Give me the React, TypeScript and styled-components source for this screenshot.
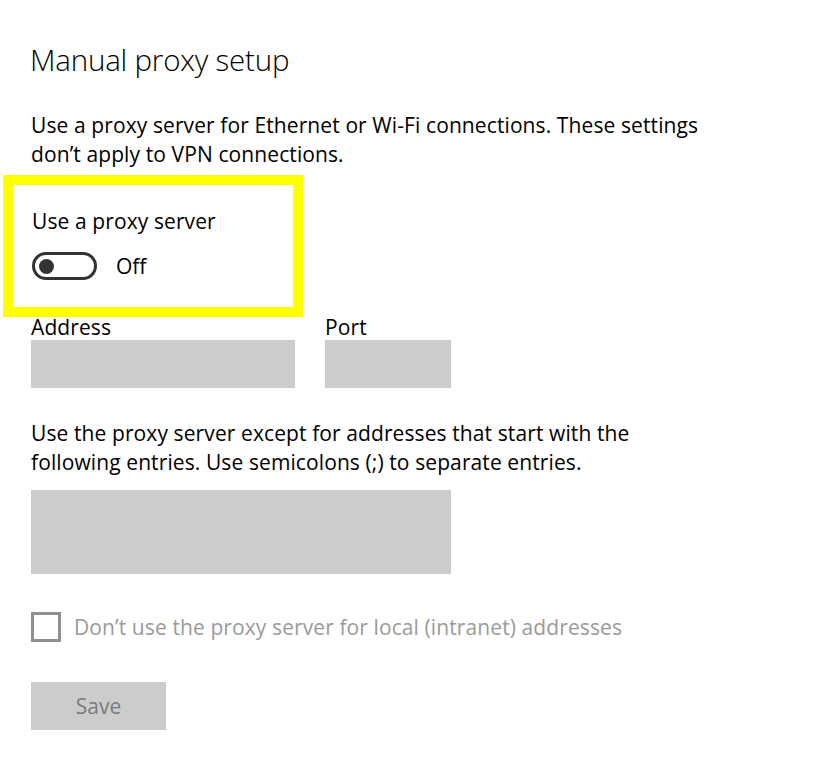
import React from 'react';
import styled, { createGlobalStyle } from 'styled-components';

const GlobalStyle = createGlobalStyle`
  html, body {
    margin: 0;
    padding: 0;
    background: #ffffff;
  }

  body {
    font-family: "Open Sans", "Noto Sans", sans-serif;
    color: #000000;
  }
`;

export default function App() {
	return (
		<>
			<GlobalStyle/>
			<Page>
				<Title>Manual proxy setup</Title>

				<Text>
					Use a proxy server for Ethernet or Wi-Fi connections. These settings<br/>
					don’t apply to VPN connections.
				</Text>

				<Highlight>
					<Text>Use a proxy server</Text>
					<ToggleRow>
						<Toggle>
							<Knob/>
						</Toggle>
						<ToggleState>Off</ToggleState>
					</ToggleRow>
				</Highlight>

				<Fields>
					<Field>
						<Label>Address</Label>
						<Input width={264}/>
					</Field>
					<Field>
						<Label>Port</Label>
						<Input width={126}/>
					</Field>
				</Fields>

				<Exceptions>
					Use the proxy server except for addresses that start with the<br/>
					following entries. Use semicolons (;) to separate entries.
				</Exceptions>
				<TextArea/>

				<CheckRow>
					<CheckBox/>
					<CheckLabel>Don’t use the proxy server for local (intranet) addresses</CheckLabel>
				</CheckRow>

				<SaveButton>Save</SaveButton>
			</Page>
		</>
	);
}


const Page = styled.div`
  display: flex;
  flex-direction: column;
  align-items: flex-start;
  padding: 40px 0 26px 31px;
`;

const Title = styled.h1`
  margin: 0 0 31px -1px;
  font-size: 29.5px;
  font-weight: 300;
  line-height: 40px;
  letter-spacing: -0.2px;
`;

const Text = styled.div`
  margin: 0;
  font-size: 21px;
  line-height: 29px;
  letter-spacing: 0.1px;
`;

const Highlight = styled.div`
  box-sizing: border-box;
  width: 300px;
  margin: 6px 0 0 -28px;
  padding: 22px 0 27px 19px;
  border: 10px solid #ffff00;
`;

const ToggleRow = styled.div`
  display: flex;
  align-items: center;
  gap: 19px;
  margin-top: 16px;
`;

const Toggle = styled.div`
  box-sizing: border-box;
  display: flex;
  align-items: center;
  width: 65px;
  height: 28px;
  padding-left: 4px;
  border: 3px solid #333333;
  border-radius: 14px;
`;

const Knob = styled.div`
  width: 15px;
  height: 15px;
  border-radius: 50%;
  background: #333333;
`;

const ToggleState = styled.span`
  font-size: 21px;
  line-height: 28px;
`;

const Fields = styled.div`
  display: flex;
  gap: 30px;
  margin-top: -1px;
`;

const Field = styled.div`
  display: flex;
  flex-direction: column;
  gap: 2px;
`;

const Label = styled.div`
  font-size: 21px;
  line-height: 22px;
  letter-spacing: 0.1px;
`;

interface IInputProps {
	width: number;
}

const Input = styled.div<IInputProps>`
  width: ${(props) => props.width}px;
  height: 48px;
  background: #cccccc;
`;

const Exceptions = styled(Text)`
  margin-top: 31px;
`;

const TextArea = styled.div`
  width: 420px;
  height: 84px;
  margin-top: 13px;
  background: #cccccc;
`;

const CheckRow = styled.div`
  display: flex;
  align-items: center;
  gap: 13px;
  margin-top: 38px;
`;

const CheckBox = styled.div`
  box-sizing: border-box;
  width: 30px;
  height: 30px;
  border: 3px solid #8f8f8f;
`;

const CheckLabel = styled.span`
  font-size: 21px;
  line-height: 30px;
  letter-spacing: 0.1px;
  color: #9a9a9a;
`;

const SaveButton = styled.div`
  display: flex;
  align-items: center;
  justify-content: center;
  width: 135px;
  height: 48px;
  margin-top: 40px;
  background: #cccccc;
  color: #7a7a7a;
  font-size: 21px;
`;
